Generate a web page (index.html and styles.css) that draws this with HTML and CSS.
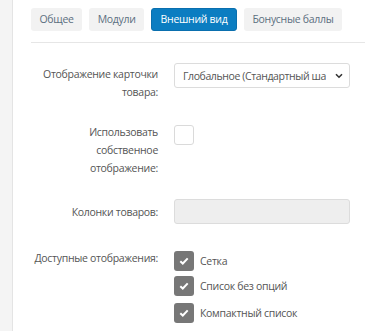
FILE: index.html
```html
<!DOCTYPE html>
<html lang="ru">
<head>
<meta charset="utf-8">
<link rel="stylesheet" href="styles.css">
</head>
<body>
<div class="page">
  <aside class="strip"></aside>
  <main class="content">
    <nav class="tabs">
      <span class="tab">Общее</span>
      <span class="tab">Модули</span>
      <span class="tab active">Внешний вид</span>
      <span class="tab">Бонусные баллы</span>
    </nav>
    <div class="form">
      <div class="row row-select">
        <div class="label">Отображение карточки товара:</div>
        <div class="control">
          <div class="select">
            <span class="select-text">Глобальное (Стандартный шаблон)</span>
            <svg class="chev" width="8" height="6" viewBox="0 0 8 6"><path d="M1 1.2 L4 4.2 L7 1.2" fill="none" stroke="#333" stroke-width="1.6"/></svg>
          </div>
        </div>
      </div>
      <div class="row row-own">
        <div class="label">Использовать собственное отображение:</div>
        <div class="control"><span class="box empty"></span></div>
      </div>
      <div class="row row-cols">
        <div class="label">Колонки товаров:</div>
        <div class="control"><div class="input disabled"></div></div>
      </div>
      <div class="row row-views">
        <div class="label">Доступные отображения:</div>
        <div class="control">
          <div class="checks">
            <div class="check"><span class="box on"><svg width="10" height="8" viewBox="0 0 10 8"><path d="M1.3 4.2 L3.8 6.5 L8.7 1.4" fill="none" stroke="#fff" stroke-width="2"/></svg></span><span>Сетка</span></div>
            <div class="check"><span class="box on"><svg width="10" height="8" viewBox="0 0 10 8"><path d="M1.3 4.2 L3.8 6.5 L8.7 1.4" fill="none" stroke="#fff" stroke-width="2"/></svg></span><span>Список без опций</span></div>
            <div class="check third"><span class="box on"><svg width="10" height="8" viewBox="0 0 10 8"><path d="M1.3 4.2 L3.8 6.5 L8.7 1.4" fill="none" stroke="#fff" stroke-width="2"/></svg></span><span>Компактный список</span></div>
          </div>
        </div>
      </div>
    </div>
  </main>
</div>
</body>
</html>
```
FILE: styles.css
```css
html, body {
  margin: 0;
  padding: 0;
  background: #fff;
}
body {
  font-family: "Open Sans", "Noto Sans", sans-serif;
  font-size: 10.5px;
  letter-spacing: -0.3px;
  color: #555;
}
.page {
  display: flex;
  min-height: 331px;
}
.strip {
  width: 12px;
  flex: 0 0 12px;
  background: #f4f4f4;
  border-right: 1px solid #e4e4e4;
}
.content {
  flex: 1;
  padding-left: 18px;
  overflow: hidden;
}
.tabs {
  display: flex;
  gap: 7px;
  padding-top: 8px;
  padding-bottom: 11px;
  border-bottom: 1px solid #e6e6e6;
}
.tab {
  height: 23px;
  line-height: 23px;
  padding: 0 8.5px;
  background: #f2f2f2;
  color: #5c6f80;
  border-radius: 3px;
  box-sizing: border-box;
  white-space: nowrap;
}
.tab.active {
  background: #0b7dc1;
  color: #fff;
  border: 1px solid #0a6fae;
  line-height: 21px;
}
.form {
  padding-top: 20px;
}
.row {
  display: grid;
  grid-template-columns: 127px 176px;
  column-gap: 16px;
}
.label {
  text-align: right;
  line-height: 18px;
  color: #555;
}
.row-select .label { padding-top: 2px; }
.row-own { margin-top: 22px; }
.row-own .control { padding-top: 2px; }
.row-cols { margin-top: 22px; }
.row-cols .label { padding-top: 4px; }
.row-views { margin-top: 25px; }
.select {
  height: 25px;
  border: 1px solid #dcdcdc;
  border-radius: 3px;
  box-sizing: border-box;
  display: flex;
  align-items: center;
  padding: 0 6px 0 8px;
  gap: 9px;
}
.select-text {
  flex: 1;
  overflow: hidden;
  white-space: nowrap;
  color: #555;
  letter-spacing: -0.4px;
}
.chev { flex: 0 0 auto; }
.input {
  height: 25px;
  border: 1px solid #dcdcdc;
  border-radius: 3px;
  box-sizing: border-box;
}
.input.disabled { background: #eeeeee; }
.box {
  width: 20px;
  height: 20px;
  box-sizing: border-box;
  border-radius: 3px;
  display: inline-flex;
  align-items: center;
  justify-content: center;
  flex: 0 0 auto;
}
.box.empty {
  border: 1px solid #dadada;
  background: #fff;
}
.box.on {
  background: #777;
}
.checks {
  display: flex;
  flex-direction: column;
  gap: 5px;
  padding-top: 2px;
}
.check {
  display: flex;
  align-items: center;
  gap: 6px;
  color: #555;
}
.check.third { margin-top: 2px; }
```
